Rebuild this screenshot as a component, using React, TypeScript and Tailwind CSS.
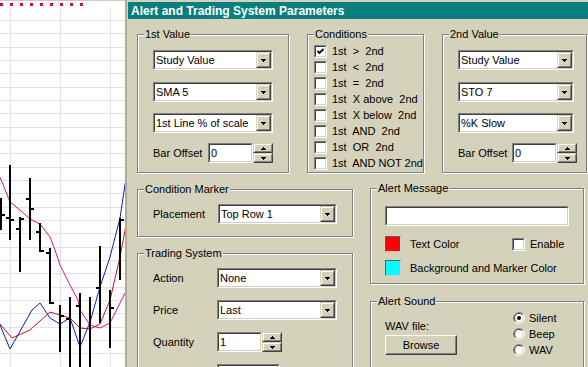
import React from 'react';

type Bar = [number, number, number, number | null, number | null];

const bars: Bar[] = [
  [1, 198, 230, null, 214],
  [10, 165, 240, 217, 219],
  [20, 217, 272, 228, 218],
  [30, 178, 240, 198, 208],
  [40, 223, 252, 231, 250],
  [50, 248, 304, 252, 302],
  [60, 305, 352, null, 315],
  [70, 297, 367, 318, null],
  [80, 293, 367, 305, null],
  [90, 297, 367, null, null],
  [100, 246, 323, 287, null],
  [110, 290, 348, null, 307],
  [120, 218, 280, null, 219],
];

const magenta = '0,177 10,202 20,210 30,219 40,224 50,237 55,250 60,265 70,285 78,300 80,310 90,325 100,328 110,323 125,293';
const red = '0,324 12,338 30,330 50,312 70,318 80,328 90,329 100,324 110,300 120,257 126,225';
const blue = '0,325 10,349 32,310 40,303 50,318 60,324 70,318 80,347 90,322 100,287 110,257 120,218 126,178';

function Chart() {
  const hl = Array.from({ length: 27 }, (_, i) => Math.round(20 + i * 13.333) + 0.5);
  return (
    <svg width="125" height="367" className="block shrink-0 bg-white">
      <rect x="0" y="0" width="125" height="1" fill="#cfccb8" />
      {hl.map((y) => (
        <line key={y} x1="0" x2="125" y1={y} y2={y} stroke="#e2e2e2" strokeWidth="1" />
      ))}
      {[10.5, 60.5, 110.5].map((x) => (
        <line key={x} x1={x} x2={x} y1="7" y2="367" stroke="#e2e2e2" strokeWidth="1" />
      ))}
      {Array.from({ length: 9 }, (_, i) => (
        <rect key={i} x={i * 10} y="3" width="3" height="3" fill="#cc1133" />
      ))}
      <polyline points={magenta} fill="none" stroke="#d0187a" strokeWidth="1" />
      <polyline points={red} fill="none" stroke="#c8102e" strokeWidth="1" />
      <polyline points={blue} fill="none" stroke="#1a1ab8" strokeWidth="1" />
      {bars.map(([x, t, b, l, r]) => (
        <g key={x} fill="#000">
          <rect x={x - 1} y={t} width="2" height={b - t} />
          {l !== null && <rect x={x - 4} y={l} width="4" height="2" />}
          {r !== null && <rect x={x} y={r} width="4" height="2" />}
        </g>
      ))}
    </svg>
  );
}

function Group({ label, className, children }: { label: string; className?: string; children?: React.ReactNode }) {
  return (
    <div className={`relative border border-[#808080] shadow-[1px_1px_0_#fff,inset_1px_1px_0_#fff] ${className ?? ''}`}>
      <span className="absolute left-[6px] top-[-8px] bg-[#d5d2bb] px-[1px] leading-[14px]">{label}</span>
      {children}
    </div>
  );
}

function Sunken({ className, children }: { className?: string; children?: React.ReactNode }) {
  return (
    <div className={`border border-b-white border-l-[#808080] border-r-white border-t-[#808080] ${className ?? ''}`}>
      <div className="flex h-full border border-b-[#d5d2bb] border-l-[#404040] border-r-[#d5d2bb] border-t-[#404040] bg-white">
        {children}
      </div>
    </div>
  );
}

function Raised({ className, children }: { className?: string; children?: React.ReactNode }) {
  return (
    <div className={`border border-b-[#404040] border-l-[#d5d2bb] border-r-[#404040] border-t-[#d5d2bb] ${className ?? ''}`}>
      <div className="flex h-full items-center justify-center border border-b-[#808080] border-l-white border-r-[#808080] border-t-white bg-[#d5d2bb]">
        {children}
      </div>
    </div>
  );
}

function Down() {
  return (
    <svg width="5" height="3" className="block">
      <rect x="0" y="0" width="5" height="1" />
      <rect x="1" y="1" width="3" height="1" />
      <rect x="2" y="2" width="1" height="1" />
    </svg>
  );
}

function Up() {
  return (
    <svg width="5" height="3" className="block">
      <rect x="2" y="0" width="1" height="1" />
      <rect x="1" y="1" width="3" height="1" />
      <rect x="0" y="2" width="5" height="1" />
    </svg>
  );
}

function Select({ value, className }: { value: string; className: string }) {
  return (
    <Sunken className={`h-[20px] ${className}`}>
      <span className="flex-1 overflow-hidden whitespace-nowrap pl-[1px] leading-[16px]">{value}</span>
      <Raised className="h-[16px] w-[15px]">
        <Down />
      </Raised>
    </Sunken>
  );
}

function Spin({ value, className }: { value: string; className: string }) {
  return (
    <div className="flex">
      <Sunken className={`h-[20px] ${className}`}>
        <span className="pl-[1px] leading-[16px]">{value}</span>
      </Sunken>
      <div className="flex h-[20px] w-[20px] flex-col">
        <Raised className="h-[10px] w-[20px]">
          <Up />
        </Raised>
        <Raised className="h-[10px] w-[20px]">
          <Down />
        </Raised>
      </div>
    </div>
  );
}

function Check({ checked }: { checked?: boolean }) {
  return (
    <div className="h-[13px] w-[13px] shrink-0 border border-b-white border-l-[#808080] border-r-white border-t-[#808080]">
      <div className="h-full w-full border border-b-[#d5d2bb] border-l-[#404040] border-r-[#d5d2bb] border-t-[#404040] bg-white">
        {checked && (
          <svg width="9" height="9" className="block">
            <polyline points="1.5,4 3.5,6 7.5,2" fill="none" stroke="#000" strokeWidth="1.8" />
          </svg>
        )}
      </div>
    </div>
  );
}

function Radio({ checked }: { checked?: boolean }) {
  return (
    <svg width="12" height="12" className="block shrink-0">
      <circle cx="6" cy="6" r="5" fill="#fff" />
      <path d="M2.1 9.9A5.5 5.5 0 0 1 9.9 2.1" fill="none" stroke="#808080" strokeWidth="1" />
      <path d="M9.9 2.1A5.5 5.5 0 0 1 2.1 9.9" fill="none" stroke="#fff" strokeWidth="1" />
      <path d="M2.8 9.2A4.5 4.5 0 0 1 9.2 2.8" fill="none" stroke="#404040" strokeWidth="1" />
      <path d="M9.2 2.8A4.5 4.5 0 0 1 2.8 9.2" fill="none" stroke="#d5d2bb" strokeWidth="1" />
      {checked && <circle cx="6" cy="6" r="2" fill="#000" />}
    </svg>
  );
}

const conditions = [
  ['1st  >  2nd', true],
  ['1st  <  2nd', false],
  ['1st  =  2nd', false],
  ['1st  X above  2nd', false],
  ['1st  X below  2nd', false],
  ['1st  AND  2nd', false],
  ['1st  OR  2nd', false],
  ['1st  AND NOT 2nd', false],
] as const;

function ValueGroup({ label, v1, v2, v3, selW, labelW }: { label: string; v1: string; v2: string; v3: string; selW: string; labelW: string }) {
  return (
    <Group label={label} className={`h-[139px] ${selW === 'a' ? 'w-[152px]' : 'w-[145px]'}`}>
      <div className="flex flex-col pl-[15px] pt-[15px]">
        <Select value={v1} className={selW === 'a' ? 'w-[120px]' : 'w-[116px]'} />
        <div className="h-[12px]" />
        <Select value={v2} className={selW === 'a' ? 'w-[120px]' : 'w-[116px]'} />
        <div className="h-[11px]" />
        <Select value={v3} className={selW === 'a' ? 'w-[120px]' : 'w-[116px]'} />
        <div className="h-[10px]" />
        <div className="flex items-center">
          <span className={`${labelW} leading-[14px]`}>Bar Offset</span>
          <Spin value="0" className="w-[45px]" />
        </div>
      </div>
    </Group>
  );
}

export default function App() {
  return (
    <div className="flex h-[367px] w-[588px] overflow-hidden font-['Liberation_Sans',Arial,sans-serif] text-[11px] text-black">
      <Chart />
      <div className="flex flex-1 flex-col border-l-2 border-[#aeab97] bg-[#d5d2bb] pl-[1px] pt-[2px]">
        <div className="flex h-[17px] items-center bg-[#087f7f] pl-[3px] text-[12px] font-bold text-white">
          Alert and Trading System Parameters
        </div>
        <div className="flex flex-col pl-[9px] pt-[15px]">
          <div className="flex gap-[18px]">
            <ValueGroup label="1st Value" v1="Study Value" v2="SMA 5" v3="1st Line % of scale" selW="a" labelW="w-[55px]" />
            <Group label="Conditions" className="h-[139px] w-[117px]">
              <div className="flex flex-col pl-[6px] pt-[8px]">
                {conditions.map(([t, c]) => (
                  <div key={t} className="flex h-[16px] items-center gap-[5px]">
                    <Check checked={c} />
                    <span className="whitespace-pre leading-[14px]">{t}</span>
                  </div>
                ))}
              </div>
            </Group>
            <ValueGroup label="2nd Value" v1="Study Value" v2="STO 7" v3="%K Slow" selW="b" labelW="w-[54px]" />
          </div>
          <div className="mt-[15px] flex gap-[17px]">
            <div className="flex w-[216px] flex-col gap-[16px] pt-[1px]">
              <Group label="Condition Marker" className="h-[48px]">
                <div className="flex items-center pl-[15px] pt-[14px]">
                  <span className="w-[65px] leading-[14px]">Placement</span>
                  <Select value="Top Row 1" className="w-[119px]" />
                </div>
              </Group>
              <Group label="Trading System" className="h-[140px]">
                <div className="flex flex-col gap-[12px] pl-[15px] pt-[14px]">
                  <div className="flex items-center">
                    <span className="w-[64px] leading-[14px]">Action</span>
                    <Select value="None" className="w-[120px]" />
                  </div>
                  <div className="flex items-center">
                    <span className="w-[64px] leading-[14px]">Price</span>
                    <Select value="Last" className="w-[120px]" />
                  </div>
                  <div className="flex items-center">
                    <span className="w-[64px] leading-[14px]">Quantity</span>
                    <Spin value="1" className="w-[45px]" />
                  </div>
                  <div className="flex items-center">
                    <span className="w-[64px] leading-[14px]"></span>
                    <Sunken className="h-[20px] w-[63px]" />
                  </div>
                </div>
              </Group>
            </div>
            <div className="flex w-[214px] flex-col gap-[17px]">
              <Group label="Alert Message" className="h-[96px]">
                <div className="flex flex-col pl-[14px] pt-[17px]">
                  <Sunken className="h-[20px] w-[184px]" />
                  <div className="mt-[10px] flex h-[16px] items-center">
                    <div className="h-[16px] w-[16px] border border-b-[#ccc] border-l-[#606060] border-r-[#ccc] border-t-[#606060] bg-[#ff0000]" />
                    <span className="ml-[9px] w-[102px] leading-[14px]">Text Color</span>
                    <Check />
                    <span className="ml-[5px] leading-[14px]">Enable</span>
                  </div>
                  <div className="mt-[8px] flex h-[16px] items-center">
                    <div className="h-[16px] w-[16px] border border-b-[#ccc] border-l-[#606060] border-r-[#ccc] border-t-[#606060] bg-[#00ffff]" />
                    <span className="ml-[9px] leading-[14px]">Background and Marker Color</span>
                  </div>
                </div>
              </Group>
              <Group label="Alert Sound" className="h-[80px]">
                <div className="flex">
                  <div className="flex w-[142px] flex-col pl-[14px] pt-[17px]">
                    <span className="leading-[14px]">WAV file:</span>
                    <div className="mt-[2px] h-[20px] w-[72px] border border-b-[#404040] border-l-white border-r-[#404040] border-t-white">
                      <div className="flex h-full items-center justify-center border border-b-[#808080] border-l-[#d5d2bb] border-r-[#808080] border-t-[#d5d2bb]">
                        Browse
                      </div>
                    </div>
                  </div>
                  <div className="flex flex-col pt-[8px]">
                    {[
                      ['Silent', true],
                      ['Beep', false],
                      ['WAV', false],
                    ].map(([t, c]) => (
                      <div key={t as string} className="flex h-[16px] items-center gap-[4px]">
                        <Radio checked={c as boolean} />
                        <span className="leading-[14px]">{t as string}</span>
                      </div>
                    ))}
                  </div>
                </div>
              </Group>
            </div>
          </div>
        </div>
      </div>
    </div>
  );
}
